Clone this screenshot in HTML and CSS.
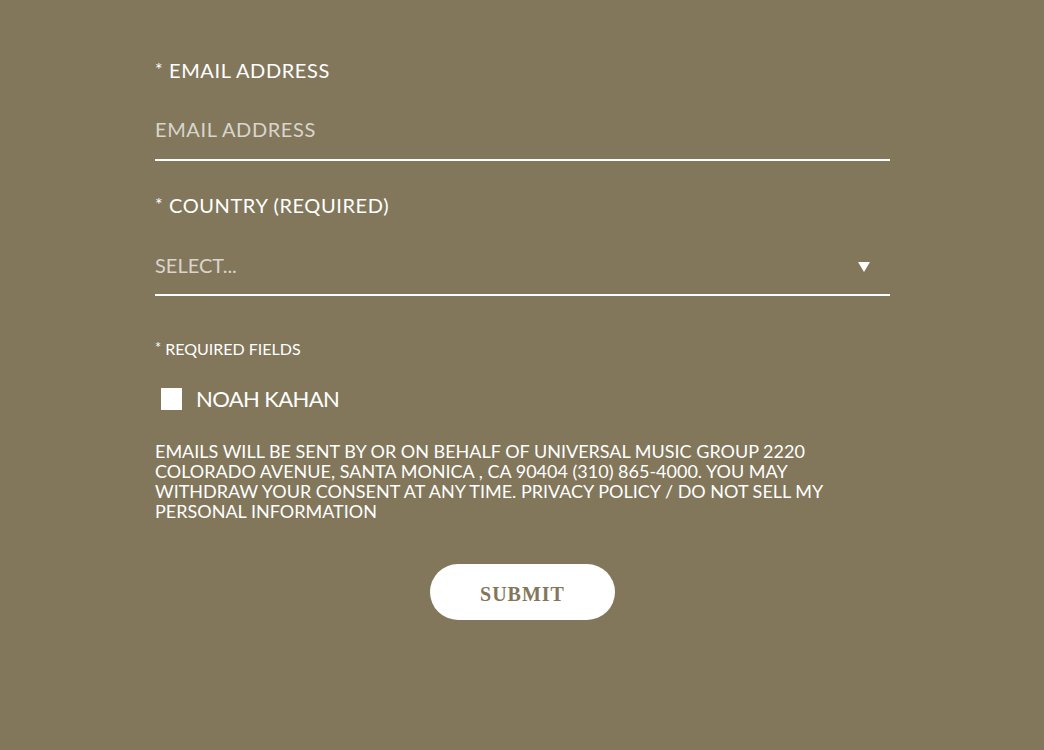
FILE: index.html
```html
<!DOCTYPE html>
<html>
<head>
<meta charset="utf-8">
<link rel="stylesheet" href="styles.css">
</head>
<body>
<form class="form">
  <div class="field">
    <label class="label"><span class="star">*</span> EMAIL ADDRESS</label>
    <div class="input"><span class="placeholder">EMAIL ADDRESS</span></div>
  </div>
  <div class="field">
    <label class="label"><span class="star">*</span> COUNTRY (REQUIRED)</label>
    <div class="input select"><span class="placeholder">SELECT...</span><span class="arrow"></span></div>
  </div>
  <p class="required"><span class="star">*</span> REQUIRED FIELDS</p>
  <div class="check"><span class="box"></span><span class="check-label">NOAH KAHAN</span></div>
  <p class="legal">EMAILS WILL BE SENT BY OR ON BEHALF OF UNIVERSAL MUSIC GROUP 2220 COLORADO AVENUE, SANTA MONICA , CA 90404 (310) 865-4000. YOU MAY WITHDRAW YOUR CONSENT AT ANY TIME. PRIVACY POLICY / DO NOT SELL MY PERSONAL INFORMATION</p>
  <div class="actions"><button type="button" class="submit">SUBMIT</button></div>
</form>
</body>
</html>
```

FILE: styles.css
```css
html, body {
  margin: 0;
  padding: 0;
  background: #82775b;
  height: 100%;
}
body {
  font-family: "Lato", "Liberation Sans", sans-serif;
  font-weight: 400;
  color: #ffffff;
}
.form {
  width: 735px;
  margin: 0 0 0 155px;
  padding-top: 56px;
  display: flex;
  flex-direction: column;
}
.field {
  display: flex;
  flex-direction: column;
}
.label {
  font-size: 20px;
  line-height: 26px;
  letter-spacing: 0.6px;
}
.star {
  font-size: 0.9em;
  vertical-align: 2px;
}
.input {
  margin-top: 33px;
  height: 43px;
  border-bottom: 2px solid #ffffff;
  display: flex;
  align-items: flex-start;
  margin-bottom: 30px;
}
.select {
  margin-top: 34px;
  height: 42px;
  justify-content: space-between;
  margin-bottom: 42px;
}
.placeholder {
  font-size: 20px;
  line-height: 26px;
  color: #d9d5cd;
  letter-spacing: 0.6px;
}
.select .placeholder {
  letter-spacing: 0;
}
.arrow {
  width: 0;
  height: 0;
  border-left: 6px solid transparent;
  border-right: 6px solid transparent;
  border-top: 10px solid #ffffff;
  margin-top: 10px;
  margin-right: 20px;
}
.required {
  margin: 0;
  font-size: 16px;
  line-height: 20px;
  letter-spacing: 0;
}
.check {
  display: flex;
  align-items: center;
  margin-top: 27px;
  padding-left: 6px;
}
.box {
  width: 21px;
  height: 22px;
  background: #ffffff;
}
.check-label {
  margin-left: 14px;
  font-size: 22px;
  line-height: 26px;
  letter-spacing: -0.6px;
}
.legal {
  margin: 29px 0 0;
  font-size: 18px;
  line-height: 20px;
  letter-spacing: 0;
  width: 700px;
}
.actions {
  display: flex;
  justify-content: center;
  margin-top: 43px;
}
.submit {
  width: 185px;
  height: 56px;
  border: none;
  border-radius: 28px;
  background: #ffffff;
  color: #82775b;
  font-family: "Liberation Serif", serif;
  font-weight: bold;
  font-size: 20px;
  letter-spacing: 1px;
  padding: 4px 0 0;
  cursor: pointer;
}
```
